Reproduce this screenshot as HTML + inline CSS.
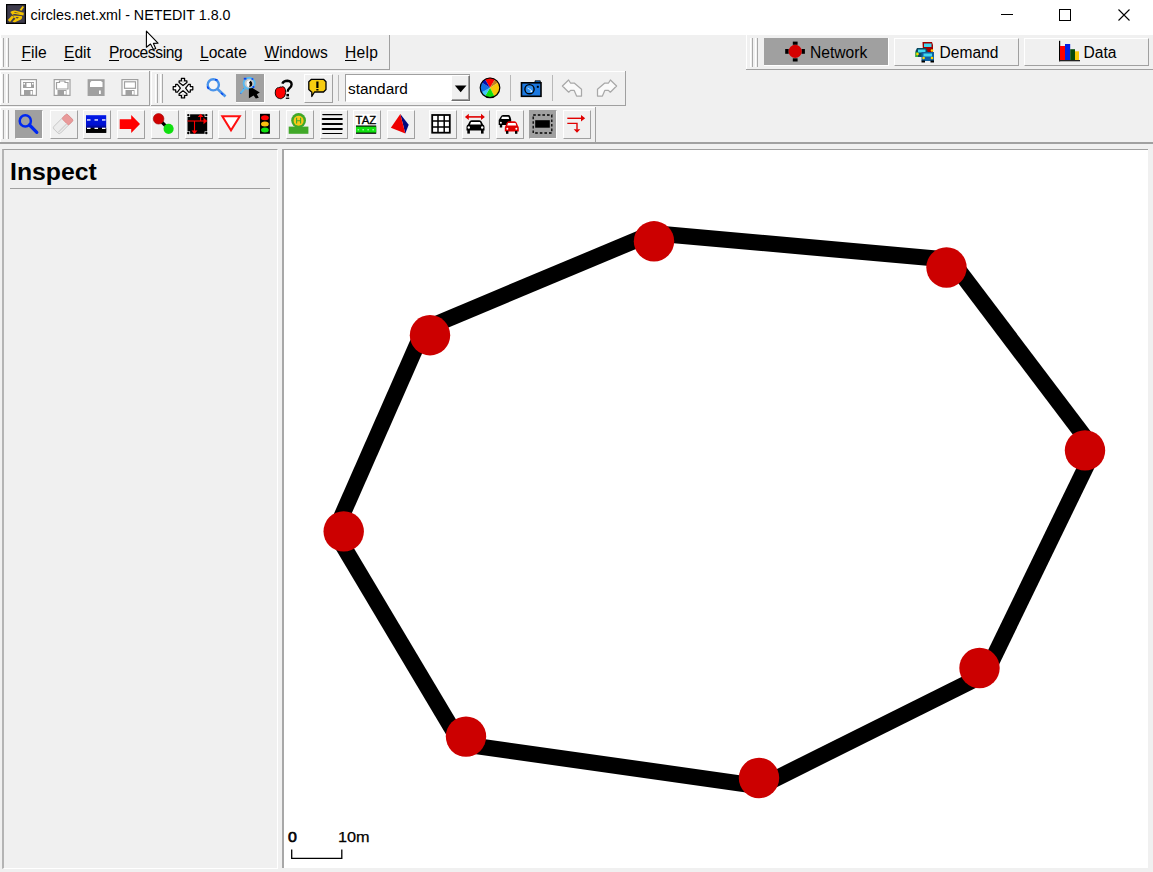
<!DOCTYPE html>
<html><head><meta charset="utf-8">
<style>
*{margin:0;padding:0;box-sizing:border-box}
html,body{width:1153px;height:872px;overflow:hidden;background:#f0f0f0;font-family:"Liberation Sans",sans-serif;color:#000}
.a{position:absolute}
.t{position:absolute;white-space:nowrap;line-height:1}
.pnl{position:absolute;background:#f0f0f0;border-right:1px solid #a0a0a0;border-bottom:1px solid #a0a0a0;box-shadow:inset 1px 1px 0 #fff}
.hl{position:absolute;height:1px;background:#a0a0a0;left:0;width:1153px}
.grip{position:absolute;width:9px}
.grip:before,.grip:after{content:"";position:absolute;top:0;bottom:0;width:1.4px;border-left:1px solid #fff;border-right:1px solid #a8a8a8}
.grip:before{left:0}.grip:after{left:5px}
.btn{position:absolute;width:28px;height:28px;border-top:1px solid #fff;border-left:1px solid #fff;border-right:1.3px solid #a0a0a0;border-bottom:1.3px solid #a0a0a0}
.btn.p{background:#a0a0a0;border-top-color:#a0a0a0;border-left-color:#a0a0a0;border-right-color:#fff;border-bottom-color:#fff}
.btn svg,.fb svg{position:absolute}
.fb{position:absolute;width:28px;height:28px}
.menu .t{font-size:15.6px;top:10.2px}
u{text-decoration:underline;text-decoration-thickness:1.2px;text-underline-offset:1.6px}
</style></head><body>
<!-- title bar -->
<div class="a" style="left:0;top:0;width:1153px;height:35px;background:#fff"></div>
<svg class="a" style="left:6px;top:4px" width="20" height="20" viewBox="0 0 20 20">
<rect x="0" y="0" width="20" height="20" fill="#000"/>
<rect x="1.2" y="1.2" width="17.6" height="17.6" fill="#3e3b4c"/>
<g fill="#f2c200">
<path d="M4.3 8 Q6 6.3 9 6.5 L17.8 8.8 L17.5 11.5 L9 10 Q7 10 6.5 11 Z"/>
<path d="M7 11.5 L15.5 12 Q17 13.5 15 15.5 L9 18.2 Q7.5 18.5 6.5 17.5 L9.5 14.8 L8 13.6 Z"/>
<path d="M1.8 16 L6 11.5 L8 13.2 L4 18 Z"/>
<path d="M13.5 6 L16.5 2 L18 3 L15.5 6.8 Z"/>
</g>
<g fill="#3e3b4c"><path d="M9.5 13 L13 13.2 L11 14.8 Z"/><path d="M8 8 L14 9.2 L9 9 Z"/></g>
</svg>
<div class="t" id="title" style="left:30.6px;top:8.2px;font-size:14.3px;color:#000">circles.net.xml - NETEDIT 1.8.0</div>
<div class="a" style="left:1001px;top:14px;width:12px;height:1px;background:#000"></div>
<div class="a" style="left:1059px;top:9px;width:12px;height:12px;border:1px solid #000"></div>
<svg class="a" style="left:1118px;top:9px" width="12" height="12"><path d="M0.5 0.5 L11.5 11.5 M11.5 0.5 L0.5 11.5" stroke="#000" stroke-width="1.1"/></svg>

<!-- row lines -->
<div class="hl" style="top:142px;height:1.5px"></div>

<!-- menu panel -->
<div class="pnl menu" style="left:0;top:35px;width:390px;height:35px;box-shadow:inset 1px 0 0 #fff">
<div class="grip" style="left:1px;top:3px;height:29px"></div>
<div class="t" style="left:21.5px"><u>F</u>ile</div>
<div class="t" style="left:64px"><u>E</u>dit</div>
<div class="t" style="left:109px;letter-spacing:-0.38px"><u>P</u>rocessing</div>
<div class="t" style="left:200px"><u>L</u>ocate</div>
<div class="t" style="left:264.5px"><u>W</u>indows</div>
<div class="t" style="left:345px;letter-spacing:0.3px"><u>H</u>elp</div>
</div>

<!-- supermode panel -->
<div class="pnl" style="left:746px;top:35px;width:407px;height:35px;border-right:none;box-shadow:inset 1px 0 0 #fff">
<div class="grip" style="left:4px;top:3px;height:29px"></div>
</div>


<!-- supermode buttons -->
<div class="a" style="left:763.5px;top:38px;width:125.5px;height:28px;background:#a0a0a0;border-right:1px solid #fff;border-bottom:1px solid #fff"></div>
<svg class="a" style="left:785px;top:41px" width="21" height="21" viewBox="0 0 21 21"><rect x="7.8" y="0.6" width="4.8" height="3.2" fill="#000"/><rect x="7.8" y="17.3" width="4.8" height="3.2" fill="#000"/><rect x="0.2" y="8" width="3.5" height="4.8" fill="#000"/><rect x="16.5" y="8" width="3.4" height="4.8" fill="#000"/><circle cx="10.2" cy="10.4" r="6.6" fill="#d40000"/></svg>
<div class="t" style="left:810px;top:44.5px;font-size:15.6px">Network</div>
<div class="btn" style="left:894px;top:38px;width:125px;height:28px"></div>
<svg class="a" style="left:914px;top:40px" width="23" height="23" viewBox="0 0 23 23">
<path d="M8.5 2 H18 L19 5 V13 H9 Z" fill="#a00000"/><rect x="10" y="3.5" width="7.5" height="3.5" fill="#40d8f0"/><circle cx="18" cy="10.5" r="1.3" fill="#ffd800"/>
<path d="M3 8 H12 L14 12 V17 H1.5 V11 Z" fill="#0a4860"/><rect x="4" y="9.5" width="7.5" height="3" fill="#40d8f0"/><rect x="1.5" y="12" width="2.5" height="5" fill="#30b030"/><circle cx="3.5" cy="14" r="1.3" fill="#ffd800"/>
<path d="M7.5 12 H20 V21 H7.5 Z" fill="#1060a0"/><rect x="9.5" y="13.5" width="8.5" height="3" fill="#40d8f0"/><circle cx="9.6" cy="18" r="1.3" fill="#ffd800"/><circle cx="18" cy="18" r="1.3" fill="#ffd800"/><rect x="7.5" y="20.5" width="3.5" height="2" fill="#000"/><rect x="16.5" y="20.5" width="3.5" height="2" fill="#000"/>
</svg>
<div class="t" style="left:939.5px;top:44.5px;font-size:15.6px">Demand</div>
<div class="btn" style="left:1024px;top:38px;width:125px;height:28px"></div>
<svg class="a" style="left:1058px;top:40px" width="23" height="23" viewBox="0 0 23 23"><rect x="1" y="0.8" width="1.2" height="20.5" fill="#000"/><rect x="1" y="20" width="21" height="1.3" fill="#222"/><rect x="2" y="6" width="5" height="14" fill="#ff0000"/><rect x="7" y="4" width="5.2" height="16" fill="#0020e8"/><rect x="12.2" y="9.2" width="4.8" height="10.8" fill="#064a0a"/><rect x="17" y="11.3" width="4" height="8.7" fill="#f8cc08"/></svg>
<div class="t" style="left:1083.5px;top:44.5px;font-size:15.6px">Data</div>

<!-- row2 panels -->
<div class="pnl" style="left:0;top:71px;width:150px;height:35px">
<div class="grip" style="left:1px;top:3px;height:29px"></div>
</div>
<div class="pnl" style="left:151px;top:71px;width:475px;height:35px">
<div class="grip" style="left:4px;top:3px;height:29px"></div>
</div>

<!-- row3 panel -->
<div class="pnl" style="left:0;top:107px;width:596px;height:35.5px">
<div class="grip" style="left:1px;top:3px;height:29px"></div>
</div>


<!-- row2 icons -->
<svg class="a" style="left:19px;top:78px" width="120" height="20" viewBox="0 0 120 20">
<g fill="none" stroke="#a0a0a0" stroke-width="1.2">
<rect x="1.6" y="1.6" width="15.8" height="15.8" fill="#fff"/>
<rect x="35.2" y="1.6" width="15.8" height="15.8" fill="#fff"/>
<rect x="103" y="1.6" width="15.8" height="15.8" fill="#fff"/>
</g>
<g fill="#a0a0a0">
<rect x="4" y="4" width="11" height="6"/><rect x="7.5" y="5" width="4.5" height="4" fill="#fff"/><rect x="4.5" y="5" width="1.5" height="1.5" fill="#fff"/><rect x="13" y="5" width="1.5" height="1.5" fill="#fff"/>
<rect x="5" y="12" width="9" height="5"/><rect x="11.5" y="13" width="1.8" height="3.5" fill="#fff"/>
<path d="M37.5 4.5 H40.5 V3 H46 V4.5 H49 V11 H37.5 Z" fill="none" stroke="#a0a0a0" stroke-width="1.2"/>
<rect x="38.5" y="12" width="9" height="5"/><rect x="45" y="13" width="1.8" height="3.5" fill="#fff"/>
<rect x="68.6" y="1.2" width="17" height="16.8"/><path d="M71 4.5 L72.5 3 H82 L83.5 4.5 V9 H71 Z" fill="#fff"/><rect x="80" y="12.5" width="1.8" height="3.5" fill="#fff"/>
<rect x="105.5" y="3.8" width="11" height="6.5" fill="none" stroke="#a0a0a0" stroke-width="1.2"/>
<rect x="106.5" y="12" width="9" height="5"/><rect x="113" y="13" width="1.8" height="3.5" fill="#fff"/>
</g></svg>
<svg class="a" style="left:168px;top:74px" width="30" height="28" viewBox="168 74 30 28">
<g fill="#fff" stroke="#000" stroke-width="1.25" stroke-linejoin="round">
<path d="M181.4 78.4 H184.6 V80.9 H186.9 V82.6 L183 85.6 L179.1 82.6 V80.9 H181.4 Z"/><path d="M181.4 78.4 H184.6 V80.9 H186.9 V82.6 L183 85.6 L179.1 82.6 V80.9 H181.4 Z" transform="rotate(90 183 88.2)"/><path d="M181.4 78.4 H184.6 V80.9 H186.9 V82.6 L183 85.6 L179.1 82.6 V80.9 H181.4 Z" transform="rotate(180 183 88.2)"/><path d="M181.4 78.4 H184.6 V80.9 H186.9 V82.6 L183 85.6 L179.1 82.6 V80.9 H181.4 Z" transform="rotate(270 183 88.2)"/>
</g>
<g fill="#b8b8b8"><rect x="182.4" y="79.3" width="1.2" height="3.5"/><rect x="182.4" y="93.6" width="1.2" height="3.5"/></g>
</svg>
<svg class="a" style="left:205px;top:77px" width="23" height="22" viewBox="0 0 23 22">
<circle cx="8.3" cy="7.8" r="5.6" fill="#f6f6f6" stroke="#4a94ea" stroke-width="2.4"/>
<path d="M12.5 12 L20.5 19.5" stroke="#4a94ea" stroke-width="2.6"/>
<path d="M2.3 9.5 L3.5 12" stroke="#0040f0" stroke-width="1.6"/><path d="M10 2.8 H12.5" stroke="#0040f0" stroke-width="1.4"/><path d="M16 16 L18 17.8" stroke="#0040f0" stroke-width="1.2"/>
</svg>
<div class="a" style="left:236px;top:74px;width:28.5px;height:28.5px;background:#a0a0a0;border-right:1px solid #fff;border-bottom:1px solid #fff"></div>
<svg class="a" style="left:236px;top:74px" width="28" height="28" viewBox="236 74 28 28">
<circle cx="249.2" cy="83.3" r="5.6" fill="#c8c8c8" stroke="#58b8f0" stroke-width="1.9"/>
<path d="M246.5 83 Q247 79.5 250.5 80.5 Q248.5 82 249.5 84.5 Q251 86.5 248.5 87 Q246.5 86 246.5 83 Z" fill="#fff"/>
<path d="M250.5 80.8 Q253 82.5 252 85.5 Q250.5 87.5 248.8 86.5 Q250.8 84.5 249 82.5 Z" fill="#000"/>
<g fill="#0a40f0"><rect x="243.8" y="77.8" width="2.6" height="1.8"/><rect x="251.5" y="78.2" width="1.8" height="1.6"/><rect x="252.5" y="86" width="1.8" height="2"/><rect x="243" y="88.3" width="1.8" height="1.4"/><rect x="240.2" y="92" width="1.4" height="1.6"/></g>
<path d="M245 88.2 L240.6 93.2" stroke="#58b8f0" stroke-width="1.9"/>
<path d="M248.9 88.6 L252.5 88 L259.8 92.5 L256.8 94.2 L258.8 97.8 L255.8 98.4 L253.6 95.6 L248.9 98.2 Z" fill="#000"/>
</svg>
<svg class="a" style="left:270px;top:76px" width="26" height="26" viewBox="270 76 26 26">
<path d="M282.3 83.6 Q283.5 80.8 287.5 80.8 Q291.6 81 291.6 84.6 Q291.6 86.8 289.4 88.3 Q287.7 89.5 287.7 91.8" stroke="#000" stroke-width="2.4" fill="none"/>
<rect x="286.4" y="93.9" width="2.6" height="2.5" fill="#000"/><rect x="285.8" y="97.6" width="3.4" height="1.3" fill="#000"/>
<path d="M279 87.8 Q280.3 86.2 281 87.3 Q282.5 86 284.2 87.3 Q285.8 89 285.7 92.5 Q285.5 97.5 281.5 98.6 Q280.5 98.9 279.6 98.5 Q275.6 98 275.2 93 Q275 88.8 277.5 87.8 Q278.5 87.5 279 87.8 Z" fill="#ff0000" stroke="#000" stroke-width="0.9"/>
</svg>
<div class="btn" style="left:304px;top:74px;width:28.5px;height:28.5px"></div>
<svg class="a" style="left:307px;top:77px" width="22" height="22" viewBox="0 0 22 22">
<path d="M4.5 2.3 H16.5 L19 4.8 V12.5 L16.5 15 H7.5 L4.8 19.5 L4.8 15 L4 14.5 L1.8 12.5 V4.8 Z" fill="#f8cc10" stroke="#000" stroke-width="1.3" stroke-linejoin="round"/>
<rect x="9.3" y="4.5" width="2.2" height="6.5" fill="#000"/><rect x="9.3" y="12" width="2.2" height="1.5" fill="#000"/>
</svg>
<div class="a" style="left:337.5px;top:75px;width:1.3px;height:26px;background:#b8b8b8"></div>
<!-- combo -->
<div class="a" style="left:345px;top:74px;width:125px;height:27.8px;background:#fff;border-top:1.4px solid #a0a0a0;border-left:1.4px solid #a0a0a0;border-bottom:1px solid #fff"></div>
<div class="a" style="left:451.2px;top:75.4px;width:18.6px;height:25.6px;background:#f0f0f0;border-left:1px solid #fff;border-top:1px solid #fff;border-right:1px solid #707070;border-bottom:1px solid #707070;box-shadow:inset -1px -1px 0 #a0a0a0"></div>
<svg class="a" style="left:454px;top:85px" width="14" height="8"><path d="M0.8 0.6 H12.5 L6.65 7.2 Z" fill="#000"/></svg>
<div class="t" style="left:348px;top:80.5px;font-size:15.4px">standard</div>
<svg class="a" style="left:479px;top:77px" width="22" height="22" viewBox="0 0 22 22">
<g transform="translate(11 10.8)">
<path d="M0 0 L-5 -8.5 A9.8 9.8 0 0 1 5 -8.5 Z" fill="#ff0000"/>
<path d="M0 0 L5 -8.5 A9.8 9.8 0 0 1 8.2 -5.2 Z" fill="#c08020"/>
<path d="M0 0 L8.2 -5.2 A9.8 9.8 0 0 1 4.5 8.7 Z" fill="#f8c808"/>
<path d="M0 0 L4.5 8.7 A9.8 9.8 0 0 1 -5 8.4 Z" fill="#10e010"/>
<path d="M0 0 L-5 8.4 A9.8 9.8 0 0 1 -8.5 4.8 Z" fill="#40c8f8"/>
<path d="M0 0 L-8.5 4.8 A9.8 9.8 0 0 1 -8.2 -5.2 Z" fill="#1070e0"/>
<path d="M0 0 L-8.2 -5.2 A9.8 9.8 0 0 1 -5 -8.5 Z" fill="#0010b0"/>
<circle r="9.8" fill="none" stroke="#000" stroke-width="1.2"/>
</g></svg>
<div class="a" style="left:510px;top:75px;width:1.3px;height:26px;background:#b8b8b8"></div>
<svg class="a" style="left:520px;top:79px" width="23" height="19" viewBox="0 0 23 19">
<path d="M15 1.8 H20.3 V3.5 H15 Z" fill="#1070d0" stroke="#000" stroke-width="0.8"/>
<rect x="1.5" y="3.8" width="19.5" height="13.5" fill="#1a78e0" stroke="#000" stroke-width="1.6"/>
<circle cx="9.5" cy="10.2" r="4.6" fill="#3090f0" stroke="#000" stroke-width="1.4"/>
<path d="M7.5 9 L11 11" stroke="#b8e0ff" stroke-width="1"/><circle cx="11.3" cy="12.2" r="0.9" fill="#fff"/>
<rect x="16.8" y="6.8" width="2" height="2" fill="#000"/>
</svg>
<div class="a" style="left:551.5px;top:75px;width:1.3px;height:26px;background:#b8b8b8"></div>
<svg class="a" style="left:560px;top:78px" width="60" height="20" viewBox="0 0 60 20">
<g fill="#fafafa" stroke="#a8a8a8" stroke-width="1.25" stroke-linejoin="round">
<path d="M2.4 8 L8.6 2 L10.5 5 H14.2 L21.5 11.3 V18 H16.6 L14.2 12.4 H10.6 L8.7 14.2 Z"/>
<path d="M56.6 8 L50.4 2 L48.5 5 H44.8 L37.5 11.3 V18 H42.4 L44.8 12.4 H48.4 L50.3 14.2 Z"/>
</g></svg>


<!-- row3 buttons -->
<div class="btn p" style="left:15.0px;top:110.3px;width:28px;height:28.3px"></div>
<div class="btn" style="left:49.5px;top:110.3px;width:28px;height:28.3px"></div>
<div class="btn" style="left:83.3px;top:110.3px;width:28px;height:28.3px"></div>
<div class="btn" style="left:117.0px;top:110.3px;width:28px;height:28.3px"></div>
<div class="btn" style="left:151.0px;top:110.3px;width:28px;height:28.3px"></div>
<div class="btn" style="left:184.7px;top:110.3px;width:28px;height:28.3px"></div>
<div class="btn" style="left:218.2px;top:110.3px;width:28px;height:28.3px"></div>
<div class="btn" style="left:251.8px;top:110.3px;width:28px;height:28.3px"></div>
<div class="btn" style="left:285.5px;top:110.3px;width:28px;height:28.3px"></div>
<div class="btn" style="left:319.5px;top:110.3px;width:28px;height:28.3px"></div>
<div class="btn" style="left:353.3px;top:110.3px;width:28px;height:28.3px"></div>
<div class="btn" style="left:387.0px;top:110.3px;width:28px;height:28.3px"></div>
<div class="btn" style="left:428.5px;top:110.3px;width:28px;height:28.3px"></div>
<div class="btn" style="left:462.0px;top:110.3px;width:28px;height:28.3px"></div>
<div class="btn" style="left:495.8px;top:110.3px;width:28px;height:28.3px"></div>
<div class="btn p" style="left:529.3px;top:110.3px;width:28px;height:28.3px"></div>
<div class="btn" style="left:563.3px;top:110.3px;width:28px;height:28.3px"></div>

<svg class="a" style="left:0;top:104px" width="600" height="40" viewBox="0 104 600 40">
<!-- 0 inspect -->
<circle cx="25.3" cy="120.9" r="5.6" fill="none" stroke="#0028f0" stroke-width="2.5"/>
<path d="M29.5 125 L36.8 132.3" stroke="#0028f0" stroke-width="3.2" stroke-linecap="round"/>
<!-- 1 delete eraser -->
<g transform="rotate(-45 63 124)">
<rect x="53" y="119.3" width="20" height="9.4" rx="2" fill="#ececec" stroke="#c4c4c4" stroke-width="0.9"/>
<rect x="66" y="119.3" width="7" height="9.4" rx="1.5" fill="#e99a9a" stroke="#e08080" stroke-width="0.7"/>
<path d="M54 126.5 H66" stroke="#d0d0d0" stroke-width="1.2"/>
</g>
<!-- 2 road -->
<defs><linearGradient id="rg" x1="0" y1="0" x2="0" y2="1"><stop offset="0" stop-color="#0018e8"/><stop offset="0.55" stop-color="#0010d0"/><stop offset="0.8" stop-color="#000050"/><stop offset="1" stop-color="#000"/></linearGradient></defs>
<rect x="86" y="115.2" width="20.2" height="17.6" fill="url(#rg)"/>
<rect x="86" y="128" width="20.2" height="4.8" fill="#000"/>
<g fill="#fff"><rect x="87" y="119.3" width="3.5" height="1.3"/><rect x="94.5" y="119.3" width="3.5" height="1.3"/><rect x="102" y="119.3" width="3.5" height="1.3"/><rect x="87" y="127.7" width="3.5" height="1.3"/><rect x="94.5" y="127.7" width="3.5" height="1.3"/><rect x="102" y="127.7" width="3.5" height="1.3"/></g>
<!-- 3 move arrow -->
<path d="M119.7 119.2 H131.2 V115 L140 124 L131.2 133 V128.9 H119.7 Z" fill="#ff0000"/>
<!-- 4 connection -->
<path d="M158.6 118.8 L168.6 128.8" stroke="#000" stroke-width="3.2"/>
<circle cx="158.6" cy="118.8" r="5.3" fill="#d00000" stroke="#a00000" stroke-width="0.6"/>
<circle cx="168.6" cy="128.8" r="5.1" fill="#10e010"/>
<!-- 5 junction -->
<rect x="187.5" y="114.3" width="19.7" height="19.5" fill="#000"/>
<g fill="#f0f0f0"><rect x="186.5" y="113.3" width="3.6" height="3.6"/><rect x="204.6" y="113.3" width="3.6" height="3.6"/><rect x="186.5" y="131.3" width="3.6" height="3.6"/><rect x="204.6" y="131.3" width="3.6" height="3.6"/></g>
<g fill="#000"><circle cx="188.3" cy="115.1" r="1.2"/><circle cx="206.3" cy="115.1" r="1.2"/><circle cx="188.3" cy="133" r="1.2"/><circle cx="206.3" cy="133" r="1.2"/></g>
<g stroke="#ff0000" stroke-width="1.1" fill="#ff0000">
<path d="M187.5 121 H205" fill="none"/><path d="M194.5 121 V131" fill="none"/><path d="M200.6 121 V116" fill="none"/>
<path d="M203.5 117.8 L207.3 121 L203.5 124.2 Z" stroke="none"/>
<path d="M191.5 130.5 L194.5 134 L197.5 130.5 Z" stroke="none"/>
<path d="M197.8 117 L200.6 113.8 L203.4 117 Z" stroke="none"/>
</g>
<!-- 6 yield -->
<path d="M222.3 116.2 H239.8 L231 130.3 Z" fill="#fff" stroke="#ff1010" stroke-width="2"/>
<!-- 7 traffic light -->
<rect x="260" y="113.8" width="9.9" height="20" fill="#000"/>
<ellipse cx="264.9" cy="117.7" rx="3.9" ry="2.5" fill="#ff0000"/>
<ellipse cx="264.9" cy="123.9" rx="3.9" ry="2.5" fill="#f8c010"/>
<ellipse cx="264.9" cy="130.1" rx="3.9" ry="2.5" fill="#10e010"/>
<!-- 8 bus stop -->
<rect x="288.7" y="126.6" width="19.7" height="7.2" fill="#40a828"/>
<circle cx="298.6" cy="120.5" r="7.4" fill="#40a828"/>
<circle cx="298.6" cy="120.8" r="5" fill="#f8c818"/>
<path d="M296.6 117.8 V123.6 M300.6 117.8 V123.6 M296.6 120.8 H300.6" stroke="#40a828" stroke-width="1.1"/>
<!-- 9 crossing -->
<g stroke="#000" stroke-linecap="round"><path d="M322.8 114.6 H341.8" stroke-width="1.2"/><path d="M322.8 119 H341.8" stroke-width="2.2"/><path d="M322.8 124 H341.8" stroke-width="2.2"/><path d="M322.8 129 H341.8" stroke-width="2.2"/><path d="M322.8 133.5 H341.8" stroke-width="1.2"/></g>
<!-- 10 TAZ -->
<rect x="355.5" y="114" width="21" height="11.5" fill="#fff"/><text x="355.6" y="123.7" font-family="Liberation Sans" font-size="11.6" stroke="#000" stroke-width="0.35" textLength="20.6" lengthAdjust="spacingAndGlyphs">TAZ</text>
<rect x="356" y="125.5" width="20.2" height="8.3" fill="#000"/>
<rect x="356" y="126.6" width="20.2" height="6" fill="#10e010"/>
<g fill="#fff" opacity="0.85"><rect x="357.6" y="129.3" width="1.5" height="1"/><rect x="362.4" y="129.3" width="1.5" height="1"/><rect x="367.4" y="129.3" width="1.5" height="1"/><rect x="372.4" y="129.3" width="1.5" height="1"/></g>
<!-- 11 polygon -->
<path d="M400.3 114.1 L408.7 124.7 L405.3 133.6 Z" fill="#000880"/>
<path d="M400.3 114.1 L390.9 127.7 L405.3 133.6 Z" fill="#ee0000"/>
<!-- 12 grid -->
<rect x="432.2" y="115" width="17.6" height="17.7" fill="#fff" stroke="#000" stroke-width="1.8"/>
<path d="M438 115 V132.7 M444.2 115 V132.7 M432.2 120.9 H449.8 M432.2 126.9 H449.8" stroke="#000" stroke-width="1.5"/>
<!-- 13 car arrows -->
<path d="M467.5 116.9 H482.5" stroke="#e00000" stroke-width="1.6"/>
<path d="M464.9 116.9 L468.8 113.8 V120 Z M484.9 116.9 L481 113.8 V120 Z" fill="#e00000"/>
<path d="M469.5 121.5 Q470.5 120.2 472 120.2 H479 Q480.5 120.2 481.5 121.5 L483 124.5 Q484.5 125 484.5 127 V130.5 H466.5 V127 Q466.5 125 468 124.5 Z" fill="#000"/>
<path d="M471 122 H480 L481 124.5 H470 Z" fill="#fff"/>
<circle cx="468.8" cy="127.5" r="1.2" fill="#fff"/><circle cx="482.2" cy="127.5" r="1.2" fill="#fff"/>
<rect x="467.3" y="130" width="2.6" height="3.6" fill="#000"/><rect x="481" y="130" width="2.6" height="3.6" fill="#000"/>
<!-- 14 two cars -->
<path d="M500.5 117 Q501.5 115 503 115 H508.5 Q510 115 510.5 117 L511.2 119.5 V125 H498.7 V120 Z" fill="#000"/>
<path d="M502 116.8 H508.5 L509.2 119 H501.2 Z" fill="#fff"/><circle cx="500.9" cy="122.8" r="1" fill="#fff"/>
<rect x="499.8" y="124.5" width="2.4" height="3" fill="#000"/>
<path d="M506.6 123 Q507.5 121.2 509 121.2 H514.5 Q516 121.2 516.8 123 L518 126 Q518.8 126.5 518.8 128 V131.5 H504.8 V128 Q504.8 126.5 505.5 126 Z" fill="#e00000"/>
<path d="M508 123 H515.5 L516.3 125.5 H507.2 Z" fill="#fff"/>
<circle cx="507.3" cy="128.7" r="1" fill="#fff"/><circle cx="516.3" cy="128.7" r="1" fill="#fff"/>
<rect x="506" y="131" width="2.4" height="2.8" fill="#000"/><rect x="515" y="131" width="2.4" height="2.8" fill="#000"/>
<!-- 15 select rect -->
<rect x="533.2" y="115" width="18.6" height="18" fill="none" stroke="#000" stroke-width="1.3" stroke-dasharray="2.6 2"/>
<rect x="535.2" y="120.2" width="14.6" height="7.5" fill="#000"/>
<!-- 16 red arrows -->
<g stroke="#e00000" stroke-width="1.4" fill="none"><path d="M567.3 118.3 H582.5"/><path d="M567.3 123.4 H577 V129.5"/></g>
<path d="M581 115 L585.2 118.3 L581 121.6 Z M573.7 129.3 H580.3 L577 132.7 Z" fill="#e00000"/>
</svg>
<!-- cursor -->
<svg class="a" style="left:145px;top:30px" width="15" height="21" viewBox="0 0 15 21"><path d="M1.4 1.2 V17.3 L5.5 14 L8.5 19.4 L10.7 18.4 L8.4 13.4 L13 13.2 Z" fill="#fff" stroke="#000" stroke-width="1.1" stroke-linejoin="round"/></svg>

<!-- left frame -->
<div class="a" style="left:2px;top:149px;width:276px;height:720px;border-left:2px solid #b4b4b4;border-top:1.5px solid #a0a0a0;border-right:1px solid #fff;border-bottom:1px solid #fff"></div>
<div class="t" style="left:10px;top:159.7px;font-size:24.8px;font-weight:bold">Inspect</div>
<div class="a" style="left:10px;top:188px;width:260px;height:1px;background:#a0a0a0"></div>

<!-- canvas -->
<div class="a" style="left:282px;top:149px;width:866px;height:719px;background:#fff;border-left:2px solid #a8a8a8;border-top:1.5px solid #a0a0a0"></div>
<svg class="a" style="left:0;top:0" width="1153" height="872">
<g fill="#000"><polygon points="655.4,225.3 947.9,251.5 946.5,267.6 654.0,241.4"/><polygon points="959.3,257.8 1097.8,440.7 1084.9,450.5 946.4,267.6"/><polygon points="1099.5,457.4 994.0,675.0 979.4,668.0 1084.9,450.4"/><polygon points="986.7,682.4 766.2,792.4 759.0,777.9 979.5,667.9"/><polygon points="756.7,793.9 463.7,752.5 466.0,736.5 759.0,777.9"/><polygon points="452.2,744.8 329.9,539.6 343.8,531.3 466.1,736.5"/><polygon points="329.0,524.9 415.3,328.7 430.1,335.2 343.8,531.4"/><polygon points="423.8,320.4 647.8,226.5 654.0,241.4 430.0,335.3"/></g><g fill="#cc0000"><circle cx="654.0" cy="241.3" r="20.2"/><circle cx="946.5" cy="267.5" r="20.2"/><circle cx="1085.0" cy="450.4" r="20.2"/><circle cx="979.5" cy="668.0" r="20.2"/><circle cx="759.0" cy="778.0" r="20.2"/><circle cx="466.0" cy="736.6" r="20.2"/><circle cx="343.7" cy="531.4" r="20.2"/><circle cx="430.0" cy="335.2" r="20.2"/></g>
<path d="M291.7 849.5 V858.3 H341.8 V849.5" stroke="#000" stroke-width="1.3" fill="none"/>
</svg>
<div class="t" style="left:287.5px;top:830px;font-size:14.5px;-webkit-text-stroke:0.6px #000;transform:scaleX(1.1);transform-origin:0 0">0</div>
<div class="t" style="left:337.8px;top:830px;font-size:14.5px;-webkit-text-stroke:0.25px #000;transform:scaleX(1.12);transform-origin:0 0">10m</div>
</body></html>
